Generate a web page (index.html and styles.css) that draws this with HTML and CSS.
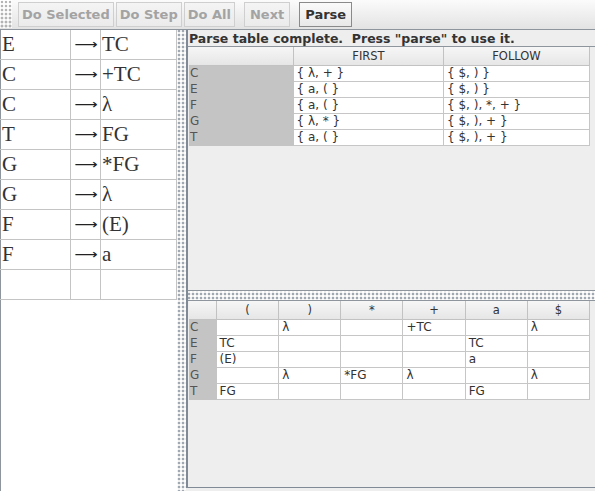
FILE: index.html
```html
<!DOCTYPE html>
<html>
<head>
<meta charset="utf-8">
<link rel="stylesheet" href="styles.css">
</head>
<body>
<div class="app">
  <div class="toolbar">
    <div class="grip"></div>
    <button class="btn" disabled>Do Selected</button>
    <button class="btn" disabled>Do Step</button>
    <button class="btn" disabled>Do All</button>
    <button class="btn sep wide" disabled>Next</button>
    <button class="btn sep wide on">Parse</button>
  </div>
  <div class="main">
    <div class="left">
      <table class="prod">
        <tr><td class="lhs">E</td><td class="arr"><span>⟶</span></td><td class="rhs">TC</td></tr>
        <tr><td class="lhs">C</td><td class="arr"><span>⟶</span></td><td class="rhs">+TC</td></tr>
        <tr><td class="lhs">C</td><td class="arr"><span>⟶</span></td><td class="rhs">λ</td></tr>
        <tr><td class="lhs">T</td><td class="arr"><span>⟶</span></td><td class="rhs">FG</td></tr>
        <tr><td class="lhs">G</td><td class="arr"><span>⟶</span></td><td class="rhs">*FG</td></tr>
        <tr><td class="lhs">G</td><td class="arr"><span>⟶</span></td><td class="rhs">λ</td></tr>
        <tr><td class="lhs">F</td><td class="arr"><span>⟶</span></td><td class="rhs">(E)</td></tr>
        <tr><td class="lhs">F</td><td class="arr"><span>⟶</span></td><td class="rhs">a</td></tr>
        <tr><td class="lhs"></td><td class="arr"></td><td class="rhs"></td></tr>
      </table>
    </div>
    <div class="vdiv"></div>
    <div class="right">
      <div class="msg">Parse table complete.&nbsp; Press "parse" to use it.</div>
      <div class="pane top">
        <table class="grid ff">
          <tr class="head"><th class="rh"></th><th class="c1">FIRST</th><th>FOLLOW</th></tr>
          <tr><td class="rh">C</td><td>{ λ, + }</td><td>{ $, ) }</td></tr>
          <tr><td class="rh">E</td><td>{ a, ( }</td><td>{ $, ) }</td></tr>
          <tr><td class="rh">F</td><td>{ a, ( }</td><td>{ $, ), *, + }</td></tr>
          <tr><td class="rh">G</td><td>{ λ, * }</td><td>{ $, ), + }</td></tr>
          <tr><td class="rh">T</td><td>{ a, ( }</td><td>{ $, ), + }</td></tr>
        </table>
      </div>
      <div class="hdiv"></div>
      <div class="pane bottom">
        <table class="grid pt">
          <tr class="head"><th class="rh"></th><th>(</th><th>)</th><th>*</th><th>+</th><th>a</th><th>$</th></tr>
          <tr><td class="rh">C</td><td></td><td>λ</td><td></td><td>+TC</td><td></td><td>λ</td></tr>
          <tr><td class="rh">E</td><td>TC</td><td></td><td></td><td></td><td>TC</td><td></td></tr>
          <tr><td class="rh">F</td><td>(E)</td><td></td><td></td><td></td><td>a</td><td></td></tr>
          <tr><td class="rh">G</td><td></td><td>λ</td><td>*FG</td><td>λ</td><td></td><td>λ</td></tr>
          <tr><td class="rh">T</td><td>FG</td><td></td><td></td><td></td><td>FG</td><td></td></tr>
        </table>
      </div>
    </div>
  </div>
</div>
</body>
</html>
```

FILE: styles.css
```css
html, body {
  margin: 0;
  padding: 0;
  background: #eeeeee;
}
.app {
  width: 595px;
  height: 491px;
  display: flex;
  flex-direction: column;
  font-family: "DejaVu Sans", sans-serif;
  overflow: hidden;
}
.toolbar {
  height: 30px;
  flex: none;
  display: flex;
  align-items: flex-start;
  padding-top: 2px;
  box-sizing: border-box;
  background: linear-gradient(#fbfbfb, #e3e3e3);
  border-bottom: 1px solid #8f959c;
}
.grip {
  width: 12px;
  height: 28px;
  margin-top: -2px;
  margin-right: 6px;
  background-image:
    radial-gradient(circle at 1px 1px, #b0b0b0 0.7px, transparent 0.8px),
    radial-gradient(circle at 1px 1px, #ffffff 0.7px, transparent 0.8px);
  background-size: 4px 4px, 4px 4px;
  background-position: 1px 1px, 3px 3px;
}
.btn {
  height: 25px;
  margin-right: 2px;
  padding: 0 3px;
  font-family: "DejaVu Sans", sans-serif;
  font-weight: bold;
  font-size: 13px;
  color: #333333;
  background: linear-gradient(#fafafa, #e8e8e8);
  border: 1px solid #8a8a8a;
  border-radius: 0;
}
.btn[disabled] {
  color: #a3a3a3;
  border-color: #cfcfcf;
  background: linear-gradient(#f4f4f4, #ebebeb);
}
.btn.sep {
  margin-left: 7px;
}
.btn.wide {
  padding: 0 5px;
}
.main {
  flex: 1;
  display: flex;
  min-height: 0;
}
.left {
  width: 177px;
  flex: none;
  background: #ffffff;
  border-left: 1px solid #8f959c;
  box-sizing: border-box;
}
.prod {
  border-collapse: collapse;
  width: 177px;
  margin-left: -1px;
  font-family: "Liberation Serif", serif;
  font-size: 21px;
  color: #333333;
}
.prod td {
  height: 29px;
  padding: 0 0 0 2px;
  line-height: 29px;
  border: 1px solid #c4c4c4;
  border-top: none;
  white-space: nowrap;
}
.prod td.lhs { width: 68px; border-left: none; }
.prod td.arr { width: 26px; text-align: right; padding: 0 3px 0 0; }
.prod td.arr span {
  display: inline-block;
  font-family: "DejaVu Sans", sans-serif;
  font-size: 13.5px;
  line-height: 10px;
  font-weight: normal;
  color: #222222;
  transform: translateY(-2px) scaleX(1.2);
  transform-origin: right center;
}
.prod td.rhs { padding-left: 1px; }
.vdiv {
  width: 9px;
  flex: none;
  background-color: #eeeeee;
  background-image:
    radial-gradient(circle at 1px 1px, #9aa3ad 0.7px, transparent 0.8px),
    radial-gradient(circle at 1px 1px, #ffffff 0.7px, transparent 0.8px);
  background-size: 4px 4px, 4px 4px;
  background-position: 1px 0, 3px 2px;
}
.right {
  flex: 1;
  display: flex;
  flex-direction: column;
  border-left: 2px solid #7f8a96;
  border-bottom: 1px solid #7f8a96;
  min-width: 0;
  margin-bottom: 3px;
}
.msg {
  height: 16px;
  flex: none;
  padding-left: 1px;
  font-weight: bold;
  font-size: 12.5px;
  line-height: 17px;
  color: #333333;
  white-space: nowrap;
}
.pane {
  background: #eeeeee;
  padding-left: 1px;
  padding-right: 5px;
  border-top: 1px solid #8f959c;
}
.pane.top {
  height: 245px;
  flex: none;
  box-sizing: border-box;
  border-bottom: 1px solid #8f959c;
}
.pane.bottom {
  flex: 1;
}
.hdiv {
  height: 9px;
  flex: none;
  background-image:
    radial-gradient(circle at 1px 1px, #9aa3ad 0.7px, transparent 0.8px),
    radial-gradient(circle at 1px 1px, #ffffff 0.7px, transparent 0.8px);
  background-size: 4px 4px, 4px 4px;
  background-position: 0 2px, 2px 4px;
}
.grid {
  width: 100%;
  border-collapse: collapse;
  table-layout: fixed;
  font-size: 12px;
  color: #333333;
}
.grid th {
  height: 18px;
  padding: 0;
  font-weight: normal;
  font-size: 11.5px;
  color: #333333;
  background: linear-gradient(#f6f6f6, #e6e6e6);
  border-right: 1px solid #c2c2c2;
  border-bottom: 1px solid #c2c2c2;
  text-align: center;
}
.grid td {
  height: 15px;
  padding: 0 0 0 3px;
  line-height: 15px;
  background: #ffffff;
  border-right: 1px solid #c6c6c6;
  border-bottom: 1px solid #c6c6c6;
  white-space: nowrap;
}
.grid td.rh {
  background: #c4c4c4;
  color: #555555;
  padding-left: 1px;
  border-right: none;
  border-bottom: none;
}
.ff th.rh { width: 104px; }
.ff th.c1 { width: 149px; }
.pt th.rh { width: 27px; }
```
